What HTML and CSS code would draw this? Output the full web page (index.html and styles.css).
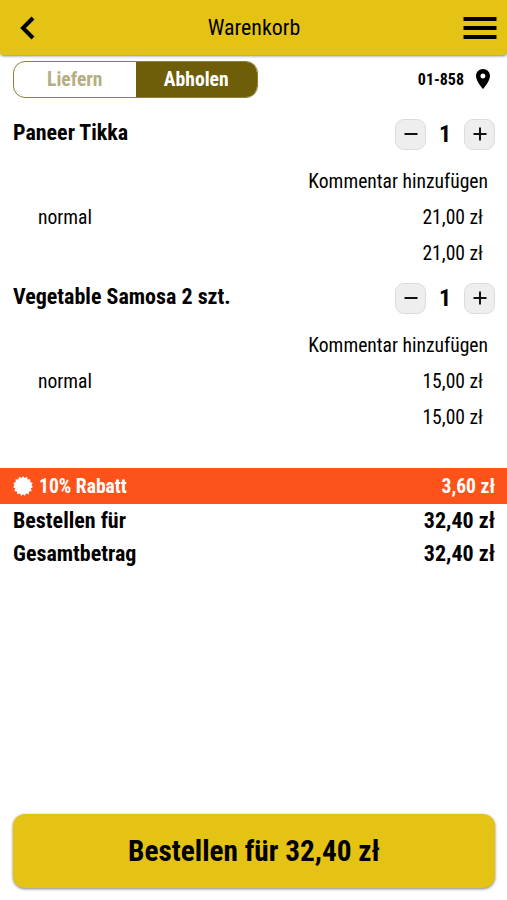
FILE: index.html
```html
<!DOCTYPE html>
<html lang="de">
<head>
<meta charset="utf-8">
<title>Warenkorb</title>
<link rel="stylesheet" href="styles.css">
</head>
<body>
<header class="topbar">
  <svg class="back" viewBox="0 0 16 24"><path d="M14 2 4 12l10 10" fill="none" stroke="#000" stroke-width="4"/></svg>
  <h1 class="heading"><span class="t">Warenkorb</span></h1>
  <svg class="menu" viewBox="0 0 34 24"><path d="M.5 2.900h33M.5 12h33M.5 21.100h33" stroke="#000" stroke-width="4"/></svg>
</header>
<section class="mode">
  <div class="toggle">
    <div class="option"><span class="t">Liefern</span></div>
    <div class="option active"><span class="t">Abholen</span></div>
  </div>
  <div class="place"><span class="t">01-858</span>
    <svg class="pin" viewBox="5 2 14 20"><path d="M12 2C8.13 2 5 5.13 5 9c0 5.25 7 13 7 13s7-7.75 7-13c0-3.87-3.13-7-7-7zm0 9.5A2.5 2.5 0 1 1 12 6.500a2.500 2.500 0 0 1 0 5z"/></svg>
  </div>
</section>
<main>
  <article class="item">
    <div class="title"><b class="t name">Paneer Tikka</b>
      <div class="stepper"><button><svg viewBox="0 0 14 14"><path d="M.5 7h13"/></svg></button><b class="count">1</b><button><svg viewBox="0 0 14 14"><path d="M.5 7h13M7 .5v13"/></svg></button></div>
    </div>
    <div class="line comment"><span class="t">Kommentar hinzufügen</span></div>
    <div class="line"><span class="t">normal</span><span class="t">21,00 zł</span></div>
    <div class="line sum"><span class="t">21,00 zł</span></div>
  </article>
  <article class="item">
    <div class="title"><b class="t name">Vegetable Samosa 2 szt.</b>
      <div class="stepper"><button><svg viewBox="0 0 14 14"><path d="M.5 7h13"/></svg></button><b class="count">1</b><button><svg viewBox="0 0 14 14"><path d="M.5 7h13M7 .5v13"/></svg></button></div>
    </div>
    <div class="line comment"><span class="t">Kommentar hinzufügen</span></div>
    <div class="line"><span class="t">normal</span><span class="t">15,00 zł</span></div>
    <div class="line sum"><span class="t">15,00 zł</span></div>
  </article>
</main>
<section class="totals">
  <div class="discount">
    <svg class="seal" viewBox="0 0 20 20"><path fill="#fff" d="M10 0l1.700 2.100L14 .8l.7 2.600 2.700-.1-.2 2.700 2.500.9-1.300 2.300L20 11l-2.200 1.500.9 2.500-2.600.5-.4 2.700-2.600-.7L11.600 20 10 18l-1.600 2-1.500-2.500-2.600.7-.4-2.700-2.600-.5.900-2.500L0 11l1.600-1.800L.3 6.900 2.800 6l-.2-2.700 2.700.1L6 .8l2.300 1.300z"/></svg>
    <b class="t label">10% Rabatt</b><b class="t label amount">3,60 zł</b>
  </div>
  <div class="total"><b class="t">Bestellen für</b><b class="t">32,40 zł</b></div>
  <div class="total"><b class="t">Gesamtbetrag</b><b class="t">32,40 zł</b></div>
</section>
<footer><button class="order"><span class="t">Bestellen für 32,40 zł</span></button></footer>
</body>
</html>
```
FILE: styles.css
```css
* { box-sizing: border-box; }
body {
  margin: 0;
  height: 900px;
  display: flex;
  flex-direction: column;
  overflow: hidden;
  background: #fff;
  color: #000;
  font-family: "Roboto Condensed", Roboto, sans-serif;
  font-stretch: 75%;
  font-size: 19.6px;
}
svg { display: block; flex: none; }
button { font: inherit; color: inherit; padding: 0; }
.t { white-space: nowrap; }
.topbar {
  height: 55px;
  flex: none;
  display: flex;
  align-items: center;
  justify-content: space-between;
  padding: 0 10px 0 19px;
  background: #e5c314;
  border-radius: 0 0 4px 4px;
  box-shadow: 0 1px 3px rgba(0, 0, 0, .5);
}
.back { width: 16px; height: 24px; }
.menu { width: 34px; height: 24px; }
.heading { margin: 0; padding-left: 10px; font-size: 21.9px; font-weight: 400; }
.mode {
  height: 48px;
  flex: none;
  display: flex;
  align-items: center;
  justify-content: space-between;
  padding: 0 17px 0 13px;
}
.toggle {
  width: 245px;
  height: 37px;
  display: flex;
  border: 1px solid #8b803c;
  border-radius: 12px;
  overflow: hidden;
  font-weight: 700;
}
.option { flex: 1; display: flex; align-items: center; justify-content: center; color: #b5ae84; }
.active { background: #6e5d09; color: #fff; }
.place { display: flex; align-items: center; gap: 11px; font-size: 16px; font-weight: 700; }
.place .t { margin-right: 1px; }
.pin { width: 14px; height: 20px; }
main { flex: none; padding-top: 13px; }
.item { height: 164px; padding: 0 12px 0 13px; }
.title { height: 36px; display: flex; align-items: center; justify-content: space-between; font-size: 22px; }
.name { padding-bottom: 4px; }
.stepper { display: flex; align-items: center; }
.stepper button {
  width: 31px;
  height: 31px;
  display: grid;
  place-items: center;
  border: 1px solid #dcdcdc;
  border-radius: 9px;
  background: #eee;
}
.stepper svg { width: 14px; height: 14px; }
.stepper path { stroke: #111; stroke-width: 2; }
.count { width: 38px; text-align: center; font-size: 24px; line-height: 30px; }
.line { height: 36px; display: flex; align-items: center; justify-content: space-between; padding: 0 12px 0 25px; }
.comment { height: 37px; margin-top: 10px; padding-top: 1px; padding-right: 7px; justify-content: flex-end; }
.sum { justify-content: flex-end; }
.totals { margin-top: 24px; }
.discount { height: 36px; display: flex; align-items: center; gap: 6px; padding: 0 12px 0 13px; background: #fe521b; color: #fff; }
.seal { width: 20px; height: 20px; }
.label { padding-top: 1px; }
.amount { margin-left: auto; }
.total { height: 33px; display: flex; align-items: center; justify-content: space-between; padding: 0 12px 0 13px; font-size: 22px; }
footer { margin-top: auto; padding: 0 12px 12px 13px; }
.order {
  display: block;
  width: 100%;
  height: 74px;
  border: 0;
  border-radius: 12px;
  background: #e5c314;
  box-shadow: 0 1px 3px rgba(0, 0, 0, .5);
  font-size: 29.3px;
  font-weight: 700;
}
```
